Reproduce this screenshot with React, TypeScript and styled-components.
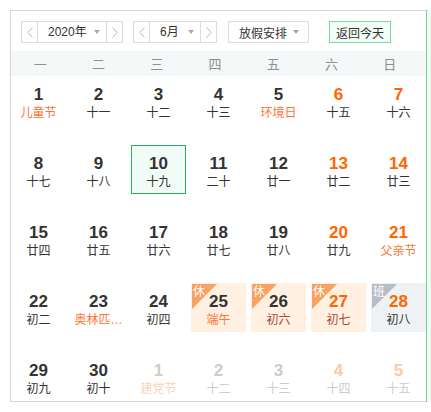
import React from "react";
import styled, { createGlobalStyle, css } from "styled-components";

const GlobalStyle = createGlobalStyle`
  html, body {
    margin: 0;
    padding: 0;
    overflow: hidden;
    background: #fff;
    font-family: "Liberation Sans", "Noto Sans CJK SC", sans-serif;
    color: #333;
  }
  * { box-sizing: border-box; }
`;

const Page = styled.div`
  display: flex;
  align-items: flex-start;
  padding: 10px 0 0 10px;
  width: 100%;
`;

const Calendar = styled.div`
  flex-shrink: 0;
  width: 416px;
  height: 392px;
  border: 1px solid #d6d6d6;
  border-right: none;
  display: flex;
  flex-direction: column;
  overflow: hidden;
`;

const SidePanel = styled.div`
  flex: 1;
  min-width: 0;
  height: 392px;
  border-left: 1px solid #74d49a;
  background: #f1fcf5;
`;

const Toolbar = styled.div`
  height: 40px;
  display: flex;
  align-items: flex-start;
  padding: 10px 0 0 10px;
`;

const Stepper = styled.div<{ $gap?: number }>`
  display: flex;
  height: 22px;
  border: 1px solid #dcdcdc;
  margin-right: ${(p) => p.$gap ?? 10}px;
  background: #fff;
`;

const ArrowBtn = styled.div`
  width: 15px;
  display: flex;
  align-items: center;
  justify-content: center;
`;

const SelectMid = styled.div<{ $w: number }>`
  width: ${(p) => p.$w}px;
  border-left: 1px solid #dcdcdc;
  border-right: 1px solid #dcdcdc;
  display: flex;
  align-items: center;
  justify-content: space-between;
  padding: 0 6px 0 10px;
  font-size: 12px;
  color: #333;
  line-height: 20px;
`;

const Caret = styled.span`
  width: 0;
  height: 0;
  border-left: 3.5px solid transparent;
  border-right: 3.5px solid transparent;
  border-top: 4px solid #a8a8a8;
`;

const Dropdown = styled.div`
  width: 81px;
  height: 22px;
  border: 1px solid #dcdcdc;
  display: flex;
  align-items: center;
  justify-content: space-between;
  padding: 0 9px 0 10px;
  font-size: 12px;
  color: #333;
  margin-right: 20px;
`;

const TodayBtn = styled.div`
  width: 62px;
  height: 22px;
  border: 1px solid #7ed7a1;
  background: #f3fdf7;
  display: flex;
  align-items: center;
  justify-content: center;
  font-size: 12px;
  color: #333;
`;

const WeekHeader = styled.div`
  height: 25px;
  background: #f4f8f8;
  display: flex;
`;

const WeekGrid = styled.div`
  width: 408px;
  display: grid;
  grid-template-columns: repeat(7, 1fr);
`;

const WeekDay = styled.div`
  display: flex;
  align-items: center;
  justify-content: center;
  font-family: "Noto Sans CJK SC", sans-serif;
  font-size: 13px;
  color: #8f8f8f;
`;

const Body = styled.div`
  display: grid;
  grid-template-columns: repeat(7, 55px);
  grid-auto-rows: 49px;
  column-gap: 5px;
  row-gap: 20px;
`;

type Kind = "rest" | "work" | undefined;

const DayBox = styled.div<{ $kind: Kind; $today: boolean }>`
  position: relative;
  display: flex;
  flex-direction: column;
  align-items: center;
  padding: 9px 2px 0;
  border: 1px solid transparent;
  ${(p) =>
    p.$kind === "rest" &&
    css`
      background: #fff0e1;
    `}
  ${(p) =>
    p.$kind === "work" &&
    css`
      background: #eef2f5;
    `}
  ${(p) =>
    p.$today &&
    css`
      border-color: #22b55c;
      background: #f2fcf6;
    `}
`;

const Num = styled.div<{ $color: string }>`
  font-family: "Liberation Sans", Arial, sans-serif;
  font-weight: bold;
  font-size: 17px;
  line-height: 20px;
  color: ${(p) => p.$color};
  margin-top: -1px;
`;

const Lunar = styled.div<{ $color: string }>`
  font-family: "Liberation Sans", "Noto Sans CJK SC", sans-serif;
  font-size: 12px;
  line-height: 16px;
  color: ${(p) => p.$color};
  white-space: nowrap;
`;

const Corner = styled.div<{ $kind: "rest" | "work" }>`
  position: absolute;
  top: 0;
  left: 0;
  width: 25px;
  height: 25px;
  background: ${(p) => (p.$kind === "rest" ? "#f8a262" : "#b7bdc4")};
  clip-path: polygon(0 0, 100% 0, 0 100%);
`;

const CornerText = styled.span`
  position: absolute;
  top: 0;
  left: 1px;
  font-family: "Noto Sans CJK SC", sans-serif;
  font-size: 12px;
  line-height: 14px;
  color: #fff;
`;

type Day = {
  n: number;
  l: string;
  fest?: boolean;
  wk?: boolean;
  other?: boolean;
  kind?: Kind;
  today?: boolean;
};

const days: Day[] = [
  { n: 1, l: "儿童节", fest: true },
  { n: 2, l: "十一" },
  { n: 3, l: "十二" },
  { n: 4, l: "十三" },
  { n: 5, l: "环境日", fest: true },
  { n: 6, l: "十五", wk: true },
  { n: 7, l: "十六", wk: true },
  { n: 8, l: "十七" },
  { n: 9, l: "十八" },
  { n: 10, l: "十九", today: true },
  { n: 11, l: "二十" },
  { n: 12, l: "廿一" },
  { n: 13, l: "廿二", wk: true },
  { n: 14, l: "廿三", wk: true },
  { n: 15, l: "廿四" },
  { n: 16, l: "廿五" },
  { n: 17, l: "廿六" },
  { n: 18, l: "廿七" },
  { n: 19, l: "廿八" },
  { n: 20, l: "廿九", wk: true },
  { n: 21, l: "父亲节", wk: true, fest: true },
  { n: 22, l: "初二" },
  { n: 23, l: "奥林匹…", fest: true },
  { n: 24, l: "初四" },
  { n: 25, l: "端午", fest: true, kind: "rest" },
  { n: 26, l: "初六", kind: "rest" },
  { n: 27, l: "初七", wk: true, kind: "rest" },
  { n: 28, l: "初八", wk: true, kind: "work" },
  { n: 29, l: "初九" },
  { n: 30, l: "初十" },
  { n: 1, l: "建党节", other: true, fest: true },
  { n: 2, l: "十二", other: true },
  { n: 3, l: "十三", other: true },
  { n: 4, l: "十四", other: true, wk: true },
  { n: 5, l: "十五", other: true, wk: true },
];

const numColor = (d: Day) => {
  if (d.other) return d.wk ? "#fdcaa6" : "#cccccc";
  return d.wk ? "#ff6600" : "#333333";
};

const lunarColor = (d: Day) => {
  if (d.other) return d.fest ? "#fcd2b4" : "#cccccc";
  if (d.fest) return "#ff7433";
  if (d.kind === "rest") return "#a8473b";
  return "#333333";
};

const Chevron = ({ dir }: { dir: "l" | "r" }) => (
  <svg width="6" height="11" viewBox="0 0 6 11">
    <polyline
      points={dir === "l" ? "5.5,0.5 0.8,5.5 5.5,10.5" : "0.5,0.5 5.2,5.5 0.5,10.5"}
      fill="none"
      stroke="#b8b8b8"
      strokeWidth="1"
    />
  </svg>
);

const weekNames = ["一", "二", "三", "四", "五", "六", "日"];

export default function App() {
  return (
    <>
      <GlobalStyle />
      <Page>
        <Calendar>
          <Toolbar>
            <Stepper>
              <ArrowBtn>
                <Chevron dir="l" />
              </ArrowBtn>
              <SelectMid $w={70}>
                <span>2020年</span>
                <Caret />
              </SelectMid>
              <ArrowBtn>
                <Chevron dir="r" />
              </ArrowBtn>
            </Stepper>
            <Stepper $gap={11}>
              <ArrowBtn>
                <Chevron dir="l" />
              </ArrowBtn>
              <SelectMid $w={52}>
                <span>6月</span>
                <Caret />
              </SelectMid>
              <ArrowBtn>
                <Chevron dir="r" />
              </ArrowBtn>
            </Stepper>
            <Dropdown>
              <span>放假安排</span>
              <Caret />
            </Dropdown>
            <TodayBtn>返回今天</TodayBtn>
          </Toolbar>
          <WeekHeader>
            <WeekGrid>
              {weekNames.map((w) => (
                <WeekDay key={w}>{w}</WeekDay>
              ))}
            </WeekGrid>
          </WeekHeader>
          <Body>
            {days.map((d, i) => (
              <DayBox key={i} $kind={d.kind} $today={!!d.today}>
                {d.kind && (
                  <>
                    <Corner $kind={d.kind} />
                    <CornerText>{d.kind === "rest" ? "休" : "班"}</CornerText>
                  </>
                )}
                <Num $color={numColor(d)}>{d.n}</Num>
                <Lunar $color={lunarColor(d)}>{d.l}</Lunar>
              </DayBox>
            ))}
          </Body>
        </Calendar>
        <SidePanel />
      </Page>
    </>
  );
}
